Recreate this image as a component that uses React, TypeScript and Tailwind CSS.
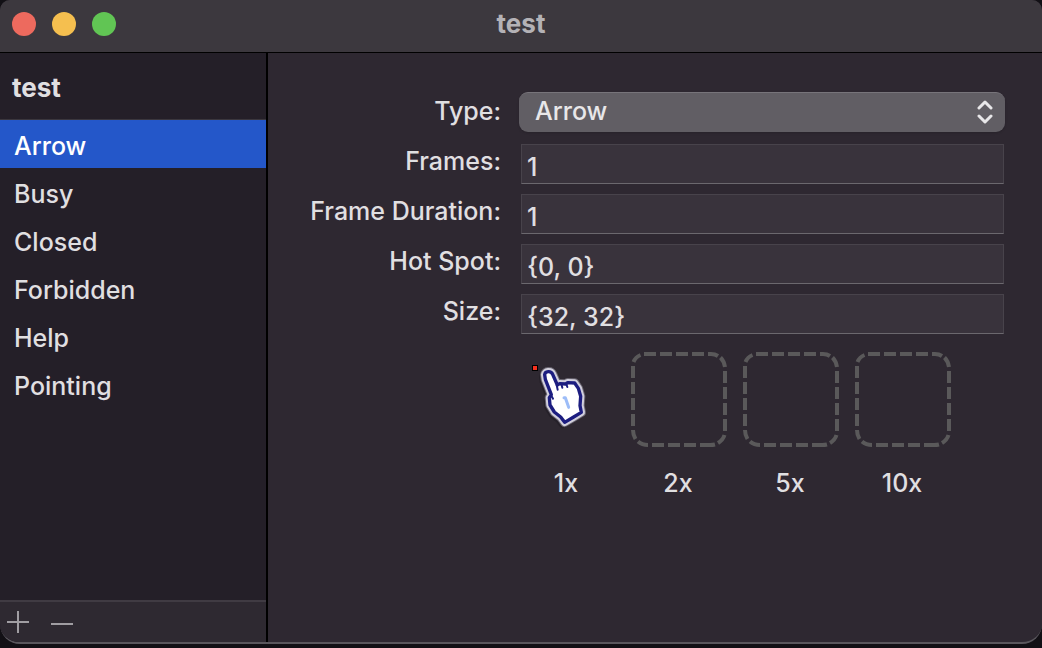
import { useState } from "react";

const cursors = ["Arrow", "Busy", "Closed", "Forbidden", "Help", "Pointing"];
const fields = [
  { id: "frames", label: "Frames:", value: "1" },
  { id: "duration", label: "Frame Duration:", value: "1" },
  { id: "hotspot", label: "Hot Spot:", value: "{0, 0}" },
  { id: "size", label: "Size:", value: "{32, 32}" },
];
const emptyScales = ["2x", "5x", "10x"];

function HandCursor() {
  const outline =
    "M59 43 C60 32 78 30 83 42 L97 74 L104 70 L122 71 L128 67 L149 68 L160 84 L167 108 L165 136 L169 156 L146 170 L119 186 L107 170 L88 155 L75 134 L73 112 L79 103 L61 57 Z";
  return (
    <svg viewBox="0 0 288 288" className="h-24 w-24 overflow-visible" aria-hidden="true">
      <g transform="translate(21 25)" strokeLinejoin="round" strokeLinecap="round">
        <path d={outline} fill="#17141b" stroke="#17141b" strokeWidth="22" opacity="0.35" transform="translate(-6 7)" />
        <path d={outline} fill="none" stroke="#a5a2b0" strokeWidth="28" opacity="0.5" />
        <path d={outline} fill="#fff" stroke="#d2d0dd" strokeWidth="22" />
        <path d={outline} fill="#fff" stroke="#1c1d80" strokeWidth="10" />
        <path d="M95 74 L98 88 M110 74 L112 82 M125 74 L127 80" fill="none" stroke="#1c1d80" strokeWidth="6" />
        <path d="M79 106 L84 115" fill="none" stroke="#1c1d80" strokeWidth="6" />
        <path d="M117 112 L121 112 L131 141" fill="none" stroke="#9dbdf8" strokeWidth="9" />
      </g>
      <rect x="42" y="39" width="18" height="18" fill="#000" />
      <rect x="45" y="42" width="12" height="12" fill="#f5311f" />
    </svg>
  );
}

function EmptySlot() {
  return (
    <svg viewBox="0 0 96 96" className="h-24 w-24 overflow-visible" aria-hidden="true">
      <g fill="none" stroke="#5a595a" strokeWidth="4">
        <path d="M14 2H26M30 2H42M46 2H58M62 2H74M78 2H81Q85 2 88 4" />
        <path d="M90.500 5.500Q94 9 95 15M95 19V31M95 35V47M95 51V63M95 67V79" />
        <path d="M94.500 83Q93 88 88 91M85 92.500Q83 93 80 93H70M66 93H54M50 93H38M34 93H22" />
        <path d="M18 93Q12 93 8 89.500M5.500 87Q3 83 3 78M3 74V62M3 58V46M3 42V30M3 26V14M3.500 10Q5.500 5 10.500 3" />
      </g>
    </svg>
  );
}

export default function App() {
  const [selected, setSelected] = useState("Arrow");
  return (
    <div className="flex h-screen flex-col bg-[#121015] pb-1 font-['Inter',sans-serif] text-[25px] leading-8 font-medium text-[#e0dfe1]">
      <div className="flex min-h-0 flex-1 flex-col overflow-hidden rounded-t-[10px] rounded-b-[20px] border-b-2 border-[#5a575d] bg-[#2e2831]">
        <header className="grid h-[53px] shrink-0 grid-cols-[1fr_auto_1fr] items-center border-b border-black bg-[#3c383e] px-3 pb-1">
          <div className="flex gap-4">
            <button aria-label="Close" className="size-6 rounded-full bg-[#ed6a5e]" />
            <button aria-label="Minimize" className="size-6 rounded-full bg-[#f5bf4f]" />
            <button aria-label="Zoom" className="size-6 rounded-full bg-[#61c554]" />
          </div>
          <h1 className="text-[26px] font-bold text-[#b4b2b6]">test</h1>
        </header>

        <div className="flex min-h-0 flex-1">
          <aside className="flex w-[268px] shrink-0 flex-col border-r-2 border-black bg-[#241f28]">
            <h2 className="flex h-[67px] items-center border-b border-[#3b373e] px-3 pt-1 text-[26px] font-bold">test</h2>
            <nav className="flex flex-1 flex-col">
              {cursors.map((name) => (
                <button
                  key={name}
                  onClick={() => setSelected(name)}
                  className={
                    name === selected
                      ? "h-12 bg-[#2457c9] px-[14px] pt-1 text-left text-white"
                      : "h-12 px-[14px] pt-1 text-left"
                  }
                >
                  {name}
                </button>
              ))}
            </nav>
            <footer className="flex h-[42px] items-center gap-5 border-t-2 border-[#403b43] bg-[#2e2931] px-[6px] text-[#a09da2]">
              <button aria-label="Add cursor">
                <svg viewBox="0 0 24 24" className="size-6" stroke="currentColor" strokeWidth="2">
                  <path d="M1 12H23M12 1V23" />
                </svg>
              </button>
              <button aria-label="Remove cursor">
                <svg viewBox="0 0 24 24" className="size-6" stroke="currentColor" strokeWidth="2">
                  <path d="M1 14H23" />
                </svg>
              </button>
            </footer>
          </aside>

          <main className="min-w-0 flex-1 pt-[39px] pr-[37px]">
            <form className="flex flex-col gap-[10px]">
              <div className="mb-[2px] flex items-center gap-[18px]">
                <label htmlFor="type" className="w-[233px] shrink-0 pb-[2px] text-right">
                  Type:
                </label>
                <div className="relative h-10 min-w-0 flex-1">
                  <select
                    id="type"
                    value={selected}
                    onChange={(e) => setSelected(e.target.value)}
                    className="h-10 w-full appearance-none rounded-[9px] border-t border-[#77747a] bg-[#615e64] px-4 pb-1 text-[#e8e7e9] shadow-sm"
                  >
                    {cursors.map((name) => (
                      <option key={name}>{name}</option>
                    ))}
                  </select>
                  <svg
                    viewBox="0 0 16 24"
                    className="pointer-events-none absolute top-2 right-3 h-6 w-4"
                    fill="none"
                    stroke="#e8e7e9"
                    strokeWidth="3"
                    strokeLinecap="round"
                    strokeLinejoin="round"
                    aria-hidden="true"
                  >
                    <path d="M2 8 8 2 14 8M2 16 8 22 14 16" />
                  </svg>
                </div>
              </div>
              {fields.map((field) => (
                <div key={field.id} className="flex items-center gap-5">
                  <label htmlFor={field.id} className="w-[233px] shrink-0 pb-[6px] text-right">
                    {field.label}
                  </label>
                  <input
                    id={field.id}
                    defaultValue={field.value}
                    className="mr-px h-10 min-w-0 flex-1 border border-[#48434b] border-b-[#6b686e] bg-[#39333c] px-[5px] pt-[6px]"
                  />
                </div>
              ))}
            </form>
            <div className="mt-[18px] ml-[250px] flex gap-4">
              <figure className="flex flex-col gap-[19px] text-center">
                <HandCursor />
                <figcaption>1x</figcaption>
              </figure>
              {emptyScales.map((scale) => (
                <figure key={scale} className="flex flex-col gap-[19px] text-center">
                  <EmptySlot />
                  <figcaption>{scale}</figcaption>
                </figure>
              ))}
            </div>
          </main>
        </div>
      </div>
    </div>
  );
}
